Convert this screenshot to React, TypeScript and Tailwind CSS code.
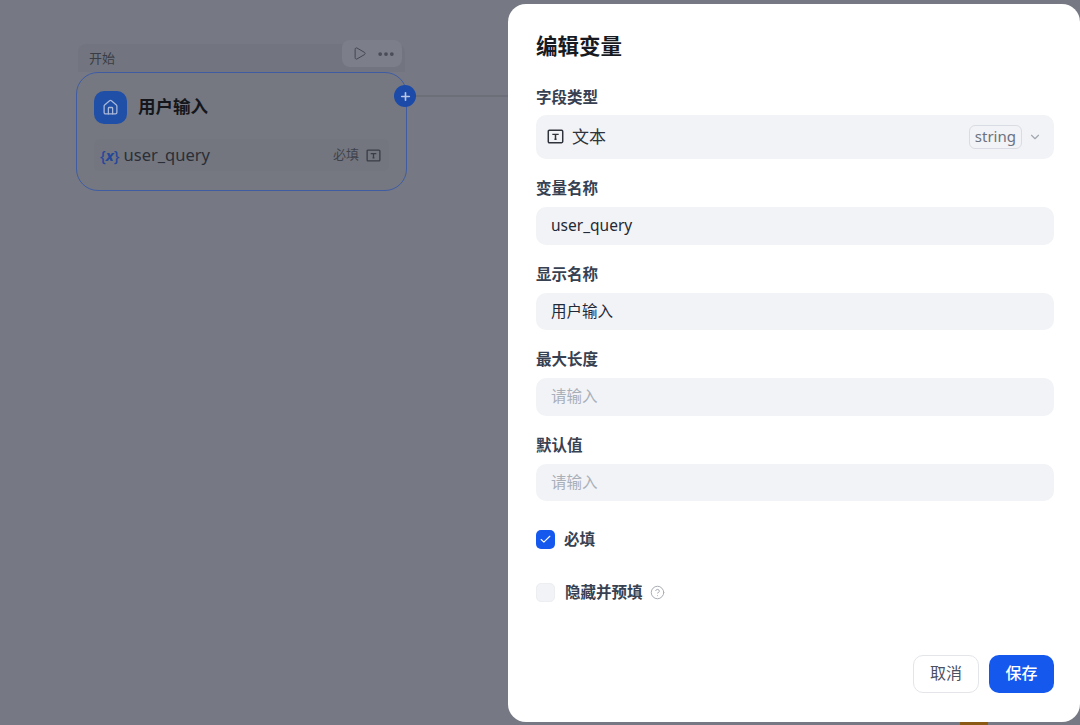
import { Check, ChevronDown, CircleHelp, Ellipsis, House, Play, Plus } from 'lucide-react'

const font = { fontFamily: '"Noto Sans", "Noto Sans CJK SC", sans-serif' }

function TextTypeIcon({ className }: { className: string }) {
  return (
    <svg viewBox="0 0 16 16" fill="none" className={className}>
      <rect x="1.2" y="2.2" width="13.6" height="11.6" rx="1" stroke="currentColor" strokeWidth="1.4" />
      <path d="M5 6h6M8 6v4.5M7 10.5h2" stroke="currentColor" strokeWidth="1.4" />
    </svg>
  )
}

function Field({ label, value, placeholder }: { label: string; value?: string; placeholder?: string }) {
  return (
    <div className="flex flex-col">
      <label className="text-[15.5px] leading-[20px] font-bold text-[#374151] mb-[9px]">{label}</label>
      <div className="h-[37.5px] rounded-[10px] bg-[#f2f3f6] px-[15px] flex items-center text-[15.5px]">
        {value ? <span className="text-[#1f2937]">{value}</span> : <span className="text-[#a9afb9]">{placeholder}</span>}
      </div>
    </div>
  )
}

function StartNode() {
  return (
    <div className="absolute left-[76px] top-[44px] w-[331px]">
      <div className="relative mx-[2px] h-[28px] pl-[11px] pt-[4px] bg-[#72757f] rounded-t-[8px] text-[13px] leading-[20px] text-[#3a3d45]">
        开始
        <div className="absolute right-[3px] -top-[4px] w-[60px] h-[27px] pl-[10px] pr-[6px] flex items-center justify-between rounded-[8px] bg-[#7c7f89]">
          <Play className="w-[15px] h-[15px] text-[#3b3f49]" strokeWidth={1.4} />
          <Ellipsis className="w-[20px] h-[20px] text-[#494c56]" strokeWidth={2.5} />
        </div>
      </div>
      <div className="relative h-[119px] rounded-[22px] border-[1.5px] border-[#3f5ca3] bg-[#757881] px-[17px] pt-[18px]">
        <div className="flex items-center gap-[11px]">
          <div className="w-[33px] h-[33px] rounded-[10px] bg-[#204fa8] flex items-center justify-center">
            <House className="w-[17px] h-[17px] text-[#a9b8d8]" strokeWidth={1.8} />
          </div>
          <span className="pb-[3px] text-[17.5px] font-bold text-[#14161b]">用户输入</span>
        </div>
        <div className="mt-[15px] h-[32px] flex items-center justify-between px-[6px] rounded-[6px] bg-[#73767f]">
          <div className="flex items-center gap-[4px]">
            <span className="text-[15px] font-medium text-[#23479a]">
              {'{'}<span className="italic font-bold">x</span>{'}'}
            </span>
            <span className="text-[16.5px] text-[#2b2e36]">user_query</span>
          </div>
          <div className="flex items-center gap-[7px] pr-[2px]">
            <span className="text-[13px] text-[#3f424b]">必填</span>
            <TextTypeIcon className="w-[15px] h-[15px] text-[#3a3d45]" />
          </div>
        </div>
        <div className="absolute -right-[10px] top-[12px] w-[22px] h-[22px] rounded-full bg-[#1c4aa8] flex items-center justify-center">
          <Plus className="w-[13px] h-[13px] text-[#b9c8e6]" strokeWidth={3} />
        </div>
      </div>
    </div>
  )
}

export default function App() {
  return (
    <div style={font} className="relative flex w-[1080px] h-[725px] overflow-hidden bg-[#767984]">
      <div className="relative flex-1">
        <StartNode />
        <div className="absolute left-[416px] right-0 top-[95px] h-[2px] bg-[#6c6f78]" />
      </div>
      <div className="relative w-[572px] h-[718px] mt-[4px] rounded-[18px] bg-white pl-[28px] pr-[26px] pt-[27px] flex flex-col">
        <h2 className="text-[21.5px] leading-[30px] font-bold text-[#171a21]">编辑变量</h2>
        <label className="mt-[26px] text-[15.5px] leading-[20px] font-bold text-[#374151] mb-[8px]">字段类型</label>
        <div className="h-[44px] rounded-[10px] bg-[#f2f3f6] pl-[11px] pr-[12px] pb-[1px] flex items-center justify-between">
          <div className="flex items-center gap-[8px]">
            <TextTypeIcon className="w-[17px] h-[17px] text-[#2f333b]" />
            <span className="text-[17px] text-[#2f333b]">文本</span>
          </div>
          <div className="flex items-center gap-[6px]">
            <span className="h-[24px] px-[5px] flex items-center rounded-[6px] border border-[#d9dce2] text-[15px] text-[#6b7280]">string</span>
            <ChevronDown className="w-[14px] h-[14px] text-[#a2a7b0]" />
          </div>
        </div>
        <div className="mt-[19px] flex flex-col gap-[19px]">
          <Field label="变量名称" value="user_query" />
          <Field label="显示名称" value="用户输入" />
          <Field label="最大长度" placeholder="请输入" />
          <Field label="默认值" placeholder="请输入" />
        </div>
        <div className="mt-[28.4px] flex items-center gap-[9px] h-[20px]">
          <div className="w-[19px] h-[19px] rounded-[5px] bg-[#1558ee] flex items-center justify-center">
            <Check className="w-[13px] h-[13px] text-white" strokeWidth={2} />
          </div>
          <span className="pt-[1px] text-[15.5px] font-bold text-[#374151]">必填</span>
        </div>
        <div className="mt-[33px] flex items-center gap-[10px] h-[20px]">
          <div className="w-[19px] h-[19px] rounded-[5px] bg-[#f2f3f6] border border-[#eceef1]" />
          <span className="text-[15.5px] font-bold text-[#374151]">隐藏并预填</span>
          <CircleHelp className="-ml-[3px] w-[15px] h-[15px] text-[#a9adb5]" strokeWidth={1.6} />
        </div>
        <div className="mt-[53px] flex justify-end gap-[10px]">
          <button className="w-[66px] h-[38px] pb-[2px] rounded-[10px] border border-[#e3e5e9] bg-white text-[16px] text-[#4b5160]">取消</button>
          <button className="w-[65px] h-[38px] pb-[2px] rounded-[10px] bg-[#1558ee] text-[16px] font-medium text-white">保存</button>
        </div>
      </div>
      <div className="absolute left-[960px] top-[722px] w-[28px] h-[3px] bg-[#8a5a14]" />
    </div>
  )
}
